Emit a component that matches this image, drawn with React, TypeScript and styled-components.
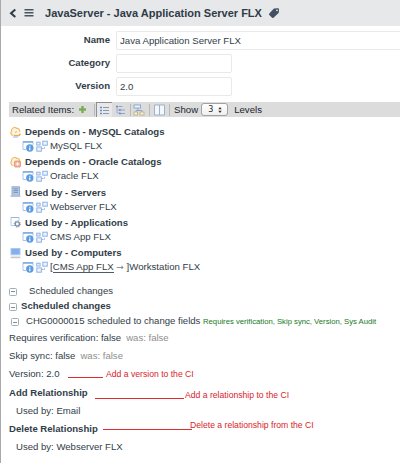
import React from "react";
import styled, { createGlobalStyle } from "styled-components";

const Global = createGlobalStyle`
  * { box-sizing: border-box; }
  body {
    margin: 0;
    background: #fff;
    color: #323d48;
    font-family: "Liberation Sans", Arial, Helvetica, sans-serif;
    font-size: 9.65px;
    overflow: hidden;
  }
`;

const Page = styled.main`
  width: 400px;
  height: 463px;
  border-left: 1px solid #a9a9a9;
  display: flex;
  flex-direction: column;
`;

const Header = styled.header`
  height: 26px;
  background: #e6e8ea;
  display: flex;
  align-items: center;
  padding-left: 8px;
  flex: none;
`;

const BackIcon = styled.svg`
  margin-right: 7px;
`;

const Title = styled.h1`
  margin: 0 6px 0 11px;
  font-size: 11.03px;
  line-height: 26px;
  font-weight: 700;
  color: #2f3b47;
  white-space: nowrap;
`;

const Form = styled.form`
  display: grid;
  grid-template-columns: 109px 1fr;
  grid-auto-rows: 19px;
  row-gap: 4px;
  column-gap: 6px;
  padding-top: 5px;
  height: 76px;
  flex: none;
`;

const Label = styled.label`
  text-align: right;
  font-weight: 700;
  font-size: 9.6px;
  line-height: 18px;
`;

const Field = styled.input<{ $full?: boolean }>`
  width: ${(p) => (p.$full ? "100%" : "116px")};
  height: 19px;
  border: 1px solid #e9e9e9;
  border-right-width: ${(p) => (p.$full ? 0 : "1px")};
  border-radius: ${(p) => (p.$full ? "2px 0 0 2px" : "2px")};
  padding: 0 3px;
  font: inherit;
  color: inherit;
  background: #fff;
  outline: 0;
`;

const Toolbar = styled.div`
  height: 15px;
  margin-left: 8px;
  background: #dcdcdc;
  display: flex;
  align-items: center;
  padding-left: 3px;
  line-height: 15px;
  color: #20272e;
  flex: none;
  white-space: nowrap;
`;

const AddIcon = styled.svg`
  margin: 0 7px 0 5px;
`;

const Divider = styled.i<{ $gap: number }>`
  width: 1px;
  height: 12px;
  background: #b9b9b9;
  margin: 0 ${(p) => p.$gap}px;
`;

const ViewButton = styled.span<{ $active?: boolean }>`
  width: 16px;
  height: 15px;
  display: flex;
  align-items: center;
  justify-content: center;
  background: ${(p) => (p.$active ? "#e8e8e8" : "transparent")};
  border: 0 solid #8f8f8f;
  border-width: ${(p) => (p.$active ? "1px 0 0 1px" : "0")};
`;

const Stepper = styled.span`
  width: 27px;
  height: 13px;
  margin: 0 6px 0 3px;
  padding: 0 5px 0 6px;
  display: flex;
  align-items: center;
  justify-content: space-between;
  border: 1px solid #a2a2a2;
  border-radius: 3px;
  background: linear-gradient(#fff, #f0f0f0);
  font: 8px/11px "DejaVu Sans", sans-serif;
`;

const Relations = styled.ul`
  list-style: none;
  margin: 0;
  padding: 7px 0 0 9px;
  height: 166px;
  flex: none;
`;

const Kind = styled.li`
  display: flex;
  align-items: center;
  height: 15.15px;
  gap: 4px;
  font-weight: 700;
  font-size: 9.6px;
  line-height: 15px;
`;

const Item = styled.li`
  display: flex;
  align-items: center;
  height: 15.15px;
  gap: 2px;
  padding: 0 0 1px 12px;
  line-height: 14px;
  white-space: pre;
`;

const Link = styled.span`
  border-bottom: 1px solid #4f5a66;
  line-height: 10px;
`;

const Arrow = styled.span`
  color: #77808a;
  font: 9px/10px "DejaVu Sans", sans-serif;
`;

const Changes = styled.section`
  display: flex;
  flex-direction: column;
`;

const Line = styled.div<{ $h: number; $indent?: number; $gap?: number; $bold?: boolean }>`
  position: relative;
  height: ${(p) => p.$h}px;
  padding-left: ${(p) => p.$indent ?? 8}px;
  display: flex;
  align-items: center;
  gap: ${(p) => p.$gap ?? 4}px;
  font-weight: ${(p) => (p.$bold ? 700 : 400)};
  font-size: 9.57px;
  line-height: 14px;
  white-space: nowrap;
  flex: none;
`;

const Was = styled.span`
  color: #8e8e8e;
`;

const Fields = styled.span`
  color: #16781c;
  font-size: 7.7px;
`;

const Toggle = styled.span`
  width: 8px;
  height: 8px;
  border: 1px solid #9fafb6;
  border-radius: 1.5px;
  display: flex;
  align-items: center;
  justify-content: center;
  position: relative;
  top: 1px;
  &::after {
    content: "";
    width: 4px;
    height: 1px;
    background: #7d9098;
  }
`;

/* Red callout drawn over a row: a leader line followed by its caption. */
const Leader = styled.i<{ $x: number; $y: number; $w: number }>`
  position: absolute;
  left: ${(p) => p.$x}px;
  top: ${(p) => p.$y}px;
  width: ${(p) => p.$w}px;
  height: 1px;
  background: #e02c31;
`;

const Caption = styled.span<{ $x: number; $y: number }>`
  position: absolute;
  left: ${(p) => p.$x}px;
  top: ${(p) => p.$y}px;
  font-size: 8.64px;
  font-weight: 400;
  line-height: 12px;
  color: #d8242b;
`;

const RecordIcon = () => (
  <svg width="12" height="12" viewBox="0 0 12 12" fill="none">
    <path d="M1 9.5V1.5h10V5" stroke="#a9c5ea" />
    <path d="M1 2h10" stroke="#7ba7e2" strokeWidth="1.5" />
    <path d="M1 9.5h3" stroke="#a9c5ea" />
    <circle cx="7.8" cy="8" r="3.7" fill="#5b9be2" />
    <path d="M7.8 5.8v1M7.8 7.4v2.8" stroke="#fff" strokeWidth="1.2" />
  </svg>
);

const MapIcon = () => (
  <svg width="12" height="12" viewBox="0 0 12 12" fill="#edf3fc" stroke="#8fb3e6">
    <path d="M6 8.500H8.500V6.500" fill="none" strokeDasharray="1.500 .7" />
    <rect x=".7" y="2.200" width="3.400" height="2.800" />
    <rect x="6.800" y="1.200" width="4.500" height="4" />
    <rect x=".8" y="6.900" width="4.600" height="4.300" />
  </svg>
);

const CatalogIcon = ({ alert }: { alert?: boolean }) => (
  <svg width="11" height="12" viewBox="0 0 11 12" fill="none">
    <path
      d="M3.500 9.500C.5 9.500.5 6 1.500 5.500C1 1.500 5.500.5 6.500 2.500C9 2 10 4 9.500 6"
      fill="#fff4dc"
      stroke="#f2bd68"
      strokeWidth="1.200"
    />
    {alert ? (
      <>
        <rect x="4.500" y="5" width="6" height="6" rx="1" fill="#f2b59a" stroke="#e78a6d" strokeWidth=".8" />
        <path d="M5.800 8h3.500M7.500 6.500v3" stroke="#fff" />
      </>
    ) : (
      <>
        <path d="M4 9.500h5l1.500-2" stroke="#f0ad4e" strokeWidth="1.500" />
        <path d="M5 6.500l2-1M3 11h5" stroke="#9dbde6" />
      </>
    )}
  </svg>
);

const ServerIcon = () => (
  <svg width="11" height="12" viewBox="0 0 11 12">
    <rect x="2" y=".8" width="7.500" height="8.500" fill="#b5c8e4" stroke="#839ec6" strokeWidth=".8" />
    <path d="M3.500 2.800h4.500M3.500 4.600h4.500M3.500 6.400h4.500" stroke="#6787b5" strokeWidth=".8" />
    <path d="M.5 9.300h10v1.700H.5z" fill="#b9c4d4" />
  </svg>
);

const AppIcon = () => (
  <svg width="11" height="12" viewBox="0 0 11 12" fill="none">
    <path d="M1 9.500V1.500h8V5M1 9.500h3" stroke="#b4caeb" />
    <path d="M1 1.500h8" stroke="#94b5e5" />
    <circle cx="7.300" cy="8" r="2.100" stroke="#7e8ea6" strokeWidth="1.300" />
    <circle cx="7.300" cy="8" r="3.100" stroke="#7e8ea6" strokeWidth="1" strokeDasharray="1.200 1.230" />
  </svg>
);

const ComputerIcon = () => (
  <svg width="11" height="12" viewBox="0 0 11 12">
    <rect x=".5" y="1" width="10" height="7.300" fill="#a9c8f4" />
    <path d="M1.500 2h8v5h-8z" fill="#86aeea" />
    <path d="M1 9.500h9l.8 1.800H.2z" fill="#c6cad2" />
  </svg>
);

const kinds = [
  { icon: <CatalogIcon />, label: "Depends on - MySQL Catalogs", item: "MySQL FLX" },
  { icon: <CatalogIcon alert />, label: "Depends on - Oracle Catalogs", item: "Oracle FLX" },
  { icon: <ServerIcon />, label: "Used by - Servers", item: "Webserver FLX" },
  { icon: <AppIcon />, label: "Used by - Applications", item: "CMS App FLX" },
  {
    icon: <ComputerIcon />,
    label: "Used by - Computers",
    item: (
      <span>
        [<Link>CMS App FLX</Link> <Arrow>→</Arrow> ]Workstation FLX
      </span>
    ),
  },
];

export default function App() {
  return (
    <>
      <Global />
      <Page>
        <Header>
          <BackIcon width="8" height="10" viewBox="0 0 8 10" fill="none" stroke="#2f3b47" strokeWidth="2">
            <path d="M6.300 1.500L2 5.300l4.300 3.800" />
          </BackIcon>
          <svg width="10" height="10" viewBox="0 0 10 10" stroke="#4a5561" strokeWidth="1.500">
            <path d="M.5 1.700h9M.5 4.700h9M.5 7.700h9" />
          </svg>
          <Title>JavaServer - Java Application Server FLX</Title>
          <svg width="12" height="12" viewBox="0 0 12 12">
            <path
              d="M6 1.500L10 1.200Q11 1.200 11 2.200L10.800 5.800L5.500 10.800Q4.800 11.300 4.100 10.700L1.300 7.900Q.7 7.100 1.300 6.400Z"
              fill="#435061"
            />
            <circle cx="9" cy="3.300" r=".9" fill="#e6e8ea" />
          </svg>
        </Header>

        <Form>
          <Label>Name</Label>
          <Field $full readOnly value="Java Application Server FLX" />
          <Label>Category</Label>
          <Field readOnly value="" />
          <Label>Version</Label>
          <Field readOnly value="2.0" />
        </Form>

        <Toolbar>
          Related Items:
          <AddIcon width="7" height="7" viewBox="0 0 7 7" stroke="#78ad58" strokeWidth="2.400">
            <path d="M3.500 0v7M0 3.500h7" />
          </AddIcon>
          <Divider $gap={1} />
          <ViewButton $active>
            <svg width="9" height="9" viewBox="0 0 9 9">
              <path d="M3 1.500h6M3 4.500h6M3 7.500h6" stroke="#8799b4" />
              <path d="M0 1.500h2M0 4.500h2M0 7.500h2" stroke="#5b8fd6" strokeWidth="1.600" />
            </svg>
          </ViewButton>
          <ViewButton>
            <svg width="9" height="10" viewBox="0 0 9 10">
              <path d="M1 1v7M1 5h3M1 8h3" stroke="#a3b2c8" fill="none" />
              <path d="M2.500 1.500h4M5 5h4M5 8.500h4" stroke="#8ba6cf" />
              <path d="M0 1.500h2M3 5h2M3 8.500h2" stroke="#5b8fd6" strokeWidth="1.600" />
            </svg>
          </ViewButton>
          <Divider $gap={2} />
          <svg width="12" height="12" viewBox="0 0 12 12" fill="#eef4fc" stroke="#8ca9d3">
            <path d="M5 4v2.500M3 8V6.500h6V9" fill="none" />
            <rect x="1" y="1" width="6.500" height="3" />
            <rect x="1" y="8" width="3.500" height="3" stroke="#c8b676" />
            <rect x="7" y="8" width="4" height="3" stroke="#c8b676" />
          </svg>
          <Divider $gap={4} />
          <svg width="11" height="12" viewBox="0 0 11 12" fill="#f4f8fc" stroke="#9db2cd">
            <path d="M.5 1h10v10H.5zM5.500 1v10" />
          </svg>
          <Divider $gap={4} />
          Show
          <Stepper>
            3
            <svg width="4" height="6" viewBox="0 0 4 6" fill="#333">
              <path d="M2 0l1.700 2.300H.3zM2 6L.3 3.700h3.400z" />
            </svg>
          </Stepper>
          Levels
        </Toolbar>

        <Relations>
          {kinds.map((k) => (
            <React.Fragment key={k.label}>
              <Kind>
                {k.icon}
                {k.label}
              </Kind>
              <Item>
                <RecordIcon />
                <MapIcon />
                {k.item}
              </Item>
            </React.Fragment>
          ))}
        </Relations>

        <Changes>
          <Line $h={15} $gap={12}>
            <Toggle />
            Scheduled changes
          </Line>
          <Line $h={16} $bold>
            <Toggle />
            Scheduled changes
          </Line>
          <Line $h={14} $indent={10} $gap={7}>
            <Toggle />
            <span>
              CHG0000015 scheduled to change fields <Fields>Requires verification, Skip sync, Version, Sys Audit</Fields>
            </span>
          </Line>
          <Line $h={20} $gap={5}>
            Requires verification: false <Was>was: false</Was>
          </Line>
          <Line $h={16} $gap={5}>
            Skip sync: false <Was>was: false</Was>
          </Line>
          <Line $h={19}>
            Version: 2.0
            <Leader $x={67} $y={13} $w={35} />
            <Caption $x={105} $y={4}>Add a version to the CI</Caption>
          </Line>
          <Line $h={20} $bold>
            Add Relationship
            <Leader $x={94} $y={15} $w={89} />
            <Caption $x={184} $y={6}>Add a relationship to the CI</Caption>
          </Line>
          <Line $h={16} $indent={15}>Used by: Email</Line>
          <Line $h={20} $bold>
            Delete Relationship
            <Leader $x={102} $y={10} $w={89} />
            <Caption $x={189} $y={0}>Delete a relationship from the CI</Caption>
          </Line>
          <Line $h={16} $indent={15}>Used by: Webserver FLX</Line>
        </Changes>
      </Page>
    </>
  );
}
